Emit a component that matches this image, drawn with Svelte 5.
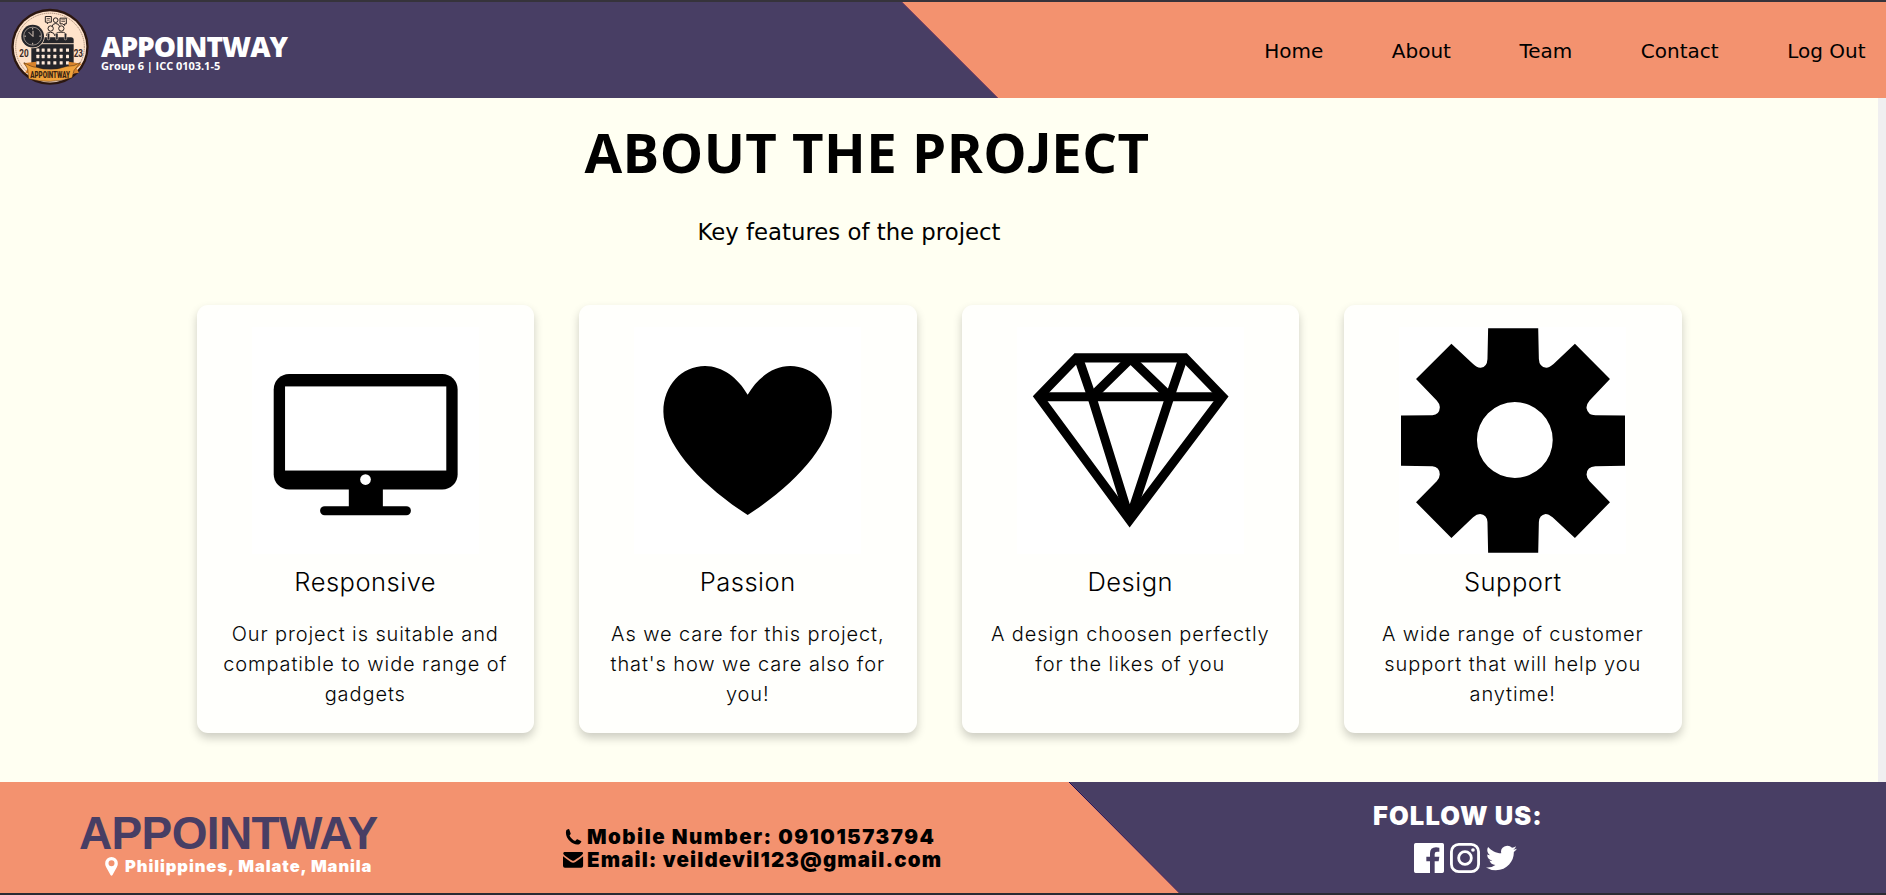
<script>
  const links = ['Home', 'About', 'Team', 'Contact', 'Log Out'];
  const cards = [
    { icon: 'screen', box: '217 111 680 680', title: 'Responsive', lines: ['Our project is suitable and', 'compatible to wide range of', 'gadgets'] },
    { icon: 'heart', box: '222 111 680 680', title: 'Passion', lines: ['As we care for this project,', "that's how we care also for", 'you!'] },
    { icon: 'gem', box: '231 111 680 680', title: 'Design', lines: ['A design choosen perfectly', 'for the likes of you'] },
    { icon: 'gear', box: '237 111 680 680', title: 'Support', lines: ['A wide range of customer', 'support that will help you', 'anytime!'] }
  ];
  const days = [109, 125, 142, 160, 179, 198];
  const weeks = [149, 168, 187];
</script>

<div class="page">
  <header>
    <svg class="backdrop" viewBox="0 0 1886 96" preserveAspectRatio="none">
      <path d="M0 0H901L997 96H0Z" fill="#483e64" />
      <path d="M901.5 0L997.5 96" stroke="#120a5c" stroke-width="1" />
    </svg>
    <a class="brand" href="#home">
      <svg class="badge" viewBox="30 20 240 236">
        <ellipse cx="150" cy="139" rx="116" ry="114" fill="#2c1710" />
        <ellipse cx="150" cy="139" rx="109" ry="107" fill="#ffe3cb" />
        <ellipse cx="150" cy="139" rx="103" ry="101" fill="none" stroke="#5a4033" stroke-width="1.5" stroke-dasharray="4 2" />
        <g fill="none" stroke="#2a2322" stroke-width="3">
          <path d="M136 48H154V65H147L142 70V65H136Z" />
          <path d="M180 53H199V70H194V75L188 70H180Z" />
          <path d="M140 54H150M140 59H149M184 58H195M184 63H195" stroke-width="2" />
          <circle cx="167" cy="59" r="7" />
          <path d="M156 78Q158 69 167 69T179 78" />
          <circle cx="152" cy="84" r="8" />
          <circle cx="184" cy="84" r="8" />
          <path d="M139 106Q139 95 151 95T165 106Q166 95 183 95T197 106" />
        </g>
        <path d="M94 128V118Q94 110 102 110H213Q221 110 221 118V128Z" fill="#25252a" />
        <rect x="94" y="131" width="127" height="75" fill="#25252a" />
        {#each [142, 167, 193] as x}
          <rect {x} y="98" width="7" height="20" rx="3" fill="#25252a" stroke="#ffe3cb" stroke-width="1.5" />
        {/each}
        {#each weeks as y}
          {#each days as x}
            <rect {x} y={y - 5} width="9" height="10" rx="1" fill="#ffe9d8" />
          {/each}
        {/each}
        <circle cx="98" cy="107" r="36" fill="#ffe3cb" />
        <circle cx="98" cy="107" r="34" fill="#25252a" />
        <circle cx="98" cy="107" r="27" fill="none" stroke="#c8bbb0" stroke-width="2" />
        <path d="M86 95L99 108V91M98 82V87M98 127V132M73 107H78M118 107H123" stroke="#ffe9d8" stroke-width="2.5" fill="none" />
        <g font-family="Roboto" font-weight="700" font-size="31" fill="#3a2924">
          <text x="58" y="170" textLength="28" lengthAdjust="spacingAndGlyphs">20</text>
          <text x="221" y="170" textLength="28" lengthAdjust="spacingAndGlyphs">23</text>
        </g>
        <path d="M69 188L108 184V221L75 217L84 203Z" fill="#d8832b" />
        <path d="M246 190L206 184V221L237 217L230 204Z" fill="#d8832b" />
        <path d="M72 186Q96 201 109 200Q151 215 202 197Q222 199 241 186L222 210L216 232Q150 252 86 235L83 206Z" fill="#f1a23b" stroke="#3a2312" stroke-width="1.5" />
        <text x="91" y="233" textLength="119" lengthAdjust="spacingAndGlyphs" font-family="Roboto" font-weight="900" font-size="25" fill="#3a2312">APPOINTWAY</text>
      </svg>
      <span class="names">
        <strong>APPOINTWAY</strong>
        <small>Group 6 | ICC 0103.1-5</small>
      </span>
    </a>
    <nav>
      {#each links as link}<a href="#top">{link}</a>{/each}
    </nav>
  </header>

  <main>
    <h1>ABOUT THE PRO<span>J</span>ECT</h1>
    <p class="lead">Key features of the project</p>
    <section class="cards">
      {#each cards as card}
        <article>
          <svg class="art" viewBox={card.box}>
            {#if card.icon === 'screen'}
              <rect x="282" y="252" width="551" height="346" rx="46" />
              <rect x="316" y="289" width="483" height="252" fill="#fff" />
              <circle cx="557" cy="568" r="16" fill="#fff" />
              <rect x="507" y="590" width="102" height="70" />
              <rect x="421" y="648" width="272" height="27" rx="13.5" />
            {:else if card.icon === 'heart'}
              <path d="M562.500 314C534 264 487 228 435 228C365 228 310 286 310 365C310 462 423 585 562.500 674C702 585 815 462 815 365C815 286 760 228 690 228C638 228 591 264 562.500 314Z" />
            {:else if card.icon === 'gem'}
              <g fill="none" stroke="#000" stroke-width="27">
                <path d="M409 203.500H734L847 320L568.500 689L296 320Z" />
                <path d="M296 320H847" />
                <path stroke-linejoin="bevel" d="M416 206L455 320L568.500 686L689 320L728 206" />
                <path stroke-linejoin="bevel" d="M455 320L571 206L689 320" />
              </g>
            {:else}
              <path fill-rule="evenodd" d="M504 115H654L656 207Q657 231 678 233Q688 233 700 222L764 161L869 267L808 331Q797 344 799 355Q803 375 825 375L914 376V527L825 528Q800 529 799 552Q798 561 808 573L869 636L764 743L697 681Q685 671 676 671Q657 674 656 695L654 787H504L502 695Q500 672 480 671Q470 671 459 681L394 743L288 636L350 573Q360 562 359 551Q358 530 337 528L243 527V376L337 375Q358 374 359 354Q361 343 350 331L288 267L394 161L459 222Q471 234 482 233Q501 231 502 207ZM584 336A113.500 113.500 0 1 0 584 563A113.500 113.500 0 1 0 584 336Z" />
            {/if}
          </svg>
          <h2>{card.title}</h2>
          <p>{#each card.lines as line}<span>{line}</span>{/each}</p>
        </article>
      {/each}
    </section>
  </main>

  <footer>
    <svg class="backdrop" viewBox="0 0 1886 111" preserveAspectRatio="none">
      <path d="M1069.500 0H1886V111H1180Z" fill="#483e64" />
      <path d="M1069 0L1179.500 111" stroke="#120a5c" stroke-width="1" />
    </svg>
    <div class="place">
      <strong>APPOINTWAY</strong>
      <span>
        <svg width="13" height="19" viewBox="0 0 13 19"><path fill="#fff" fill-rule="evenodd" d="M6.500 0A6.300 6.300 0 0 0 .2 6.300C.2 8 .6 9 1.200 10.200L5.500 18Q6.500 19.500 7.500 18L11.800 10.200C12.400 9 12.800 8 12.800 6.300A6.300 6.300 0 0 0 6.500 0ZM6.500 3.300A3 3 0 1 1 6.500 9.300A3 3 0 1 1 6.500 3.300Z" /></svg>
        Philippines, Malate, Manila
      </span>
    </div>
    <div class="contact">
      <div class="phone">
        <svg width="24" height="16" viewBox="0 0 24 16"><path d="M5.500 0L3.400 .9C2 4.800 3.800 9 6.800 12C9.800 15 13.900 16.500 16.600 15L18.300 12.900Q18.400 12.300 17.900 12L14.500 10.200Q14 10 13.600 10.400L12.200 12C10 11.200 7.500 8.600 6.500 6.400L7.500 5.200Q7.800 4.800 7.600 4.300L6.300 .5Q6 -.1 5.500 0Z" /></svg>
        Mobile Number: 09101573794
      </div>
      <div class="mail">
        <svg width="24" height="16" viewBox="0 0 24 16"><path d="M1.200 0H19Q20.300 .2 20 1.800C18.500 4.200 14 6.500 11.600 8.300Q10.100 9.300 8.600 8.300C6 6.400 2 4.200 .3 1.900Q0 .4 1.200 0Z" /><path d="M0 4.300Q3.500 7 7.800 10Q10.100 11.500 12.400 10Q16.800 7.200 20.100 4.300V13.800Q20.100 15.700 18.200 15.700H1.900Q0 15.700 0 13.800Z" /></svg>
        Email: veildevil123@gmail.com
      </div>
    </div>
    <div class="follow">
      <strong>FOLLOW US:</strong>
      <div class="social">
        <svg width="30" height="30" viewBox="0 0 90 90" fill="#fff"><path d="M5 0H85Q90 0 90 5V85Q90 90 85 90H62V55H74L76 41H62V33Q62 26 69 26H76V14Q72 13 66 13Q48 13 48 31V41H37V55H48V90H5Q0 90 0 85V5Q0 0 5 0Z" /></svg>
        <svg width="30" height="30" viewBox="0 0 90 90" fill="none" stroke="#fff" stroke-width="8.500"><rect x="4.300" y="4.300" width="81.400" height="81.400" rx="22" /><circle cx="45" cy="45" r="19" /><circle cx="69" cy="21" r="5.500" fill="#fff" stroke="none" /></svg>
        <svg width="31" height="30" viewBox="0 0 24 24" fill="#fff" preserveAspectRatio="none"><path d="M23.950 4.570a10 10 0 0 1-2.820.77 4.960 4.960 0 0 0 2.160-2.720c-.95.550-2 .960-3.130 1.180a4.920 4.920 0 0 0-8.380 4.480C7.690 8.090 4.070 6.130 1.640 3.160a4.820 4.820 0 0 0-.67 2.480c0 1.710.87 3.210 2.190 4.100a4.900 4.900 0 0 1-2.230-.62v.06a4.920 4.920 0 0 0 3.950 4.830 5 5 0 0 1-2.210.08 4.940 4.940 0 0 0 4.600 3.420A9.870 9.870 0 0 1 0 19.540a13.990 13.990 0 0 0 7.550 2.210c9.050 0 14-7.500 14-13.980 0-.21 0-.42-.02-.63a9.940 9.940 0 0 0 2.420-2.570Z" /></svg>
      </div>
    </div>
  </footer>
</div>

<style>
  :global(body) { background: #fffff2; overflow: hidden; }
  .page {
    width: 1886px;
    height: 895px;
    box-sizing: border-box;
    display: flex;
    flex-direction: column;
    border-top: 2px solid #36333b;
    border-bottom: 2px solid #2b2b33;
    color: #000;
  }
  a { color: inherit; text-decoration: none; }
  header, footer { position: relative; display: flex; flex: none; background: #f3926f; }
  header { height: 96px; justify-content: space-between; }
  .backdrop { position: absolute; inset: 0; width: 100%; height: 100%; }
  .brand { position: relative; display: flex; padding: 5px 0 0 10px; color: #fff; }
  .badge { width: 80px; height: 79px; }
  .names { display: flex; flex-direction: column; padding: 24px 0 0 11px; font-family: 'Open Sans', sans-serif; font-weight: 700; }
  .names strong { font-size: 28px; line-height: 30px; letter-spacing: -0.95px; }
  .names small { font-size: 11px; line-height: 12px; margin-top: -1px; letter-spacing: -0.03px; }
  nav { position: relative; display: flex; gap: 68.500px; padding: 37px 20.500px 0 0; font: 20px/24px 'DejaVu Sans', Verdana, sans-serif; }
  main { flex: 1; display: flex; flex-direction: column; width: 1878px; border-right: 8px solid #f0eff0; box-sizing: content-box; }
  h1 { margin: 14px 144px 0 0; text-align: center; font: 700 54.600px/80px 'Open Sans', sans-serif; letter-spacing: 0.45px; }
  h1 span { font-family: Lato, sans-serif; font-weight: 900; line-height: 1; }
  .lead { margin: 27px 180px 0 0; text-align: center; font: 22.800px/26px 'DejaVu Sans', Verdana, sans-serif; }
  .cards { display: grid; grid-template-columns: repeat(4, 337.500px); justify-content: center; gap: 45px; margin-top: 60px; }
  article {
    height: 428px;
    box-sizing: border-box;
    padding-top: 22px;
    display: flex;
    flex-direction: column;
    align-items: center;
    border-radius: 11px;
    background: #fffffc;
    box-shadow: 0 5px 10px rgba(0, 0, 0, 0.2);
    font-family: Inter, sans-serif;
    font-weight: 300;
    text-align: center;
  }
  .art { width: 227px; height: 227px; background: #fff; }
  h2 { margin: 11px 0 0; font-size: 25.500px; line-height: 34px; font-weight: 300; letter-spacing: 0.5px; }
  article p { margin: 20px 0 0; font-size: 20px; line-height: 30px; letter-spacing: 0.9px; color: #060606; }
  article p span { display: block; white-space: nowrap; }
  footer { height: 111px; font-family: Inter, sans-serif; font-weight: 900; }
  .place { position: relative; width: 484px; padding: 26px 0 0 79px; color: #fff; }
  .place strong { display: block; color: #483e64; font: 700 46px/50px 'Liberation Sans', Arial, sans-serif; letter-spacing: -0.65px; }
  .place span { display: flex; align-items: center; gap: 7px; margin: -1px 0 0 26px; font-size: 16.500px; line-height: 17px; letter-spacing: 0.92px; }
  .contact { position: relative; width: 810px; padding-top: 43px; font-size: 20.500px; line-height: 23px; }
  .contact div { display: flex; align-items: center; height: 23px; }
  .phone { letter-spacing: 1.48px; }
  .mail { letter-spacing: 1.12px; }
  .follow { position: relative; padding-top: 19px; color: #fff; }
  .follow strong { display: block; font-size: 25.500px; line-height: 30px; letter-spacing: 1.1px; }
  .social { display: flex; gap: 6px; margin: 12px 0 0 41px; }
</style>
